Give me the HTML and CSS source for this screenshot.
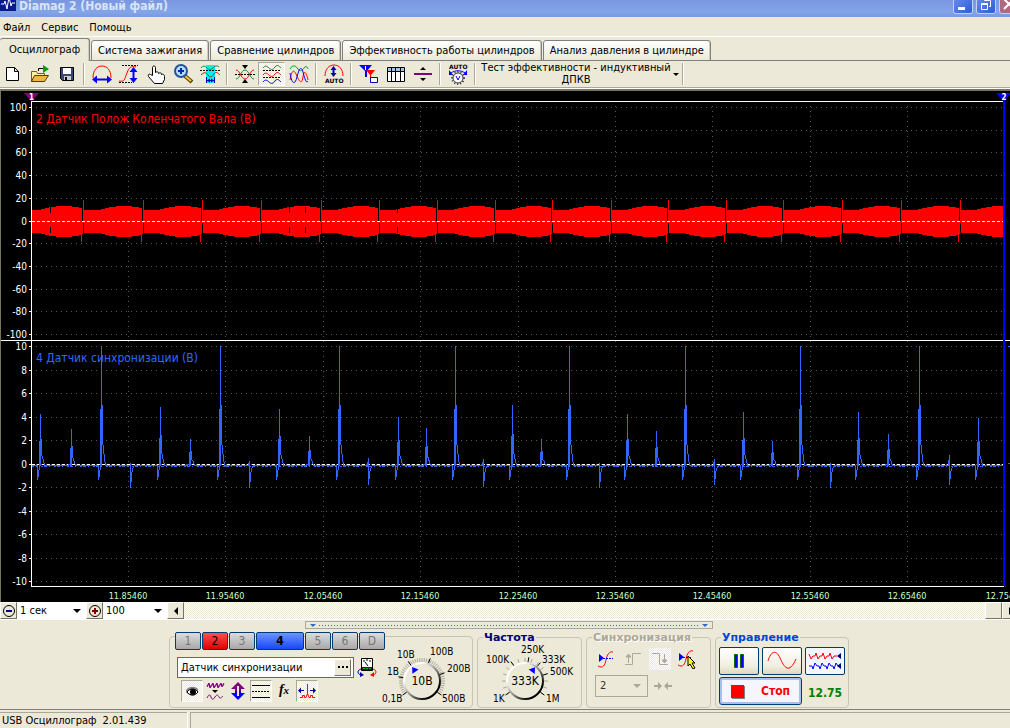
FILE: index.html
```html
<!DOCTYPE html>
<html lang="ru">
<head>
  <meta charset="UTF-8" />
  <meta name="viewport" content="width=device-width, initial-scale=1.0"/>
  <title>Diamag 2 (Новый файл)</title>
  <link rel="stylesheet" href="styles.css">
</head>
<body>
  <header class="titlebar">
    <svg class="app-icon" width="16" height="16" viewBox="0 0 16 16"><rect width="16" height="16" fill="#0a1a8c"/><path d="M1 9h3l1-3 2 8 2-12 2 9 1-3h3" fill="none" stroke="#fff"/></svg>
    <h1>Diamag 2 (Новый файл)</h1>
    <div class="window-buttons">
      <button aria-label="Свернуть"><svg width="18" height="18"><path d="M4 12h7v3H4z" fill="#fff"/></svg></button>
      <button aria-label="Развернуть"><svg width="18" height="18" fill="none" stroke="#fff"><path d="M4.500 8.500h6v6h-6zM4 9.500h7M7.500 6V5.500h6v6H12"/></svg></button>
      <button class="close" aria-label="Закрыть"><svg width="18" height="18"><path d="M4 4l10 10M14 4L4 14" stroke="#fff" stroke-width="2"/></svg></button>
    </div>
  </header>

  <nav class="menu">
    <a href="#">Файл</a>
    <a href="#">Сервис</a>
    <a href="#">Помощь</a>
  </nav>

  <div class="tabs">
    <button class="tab active">Осциллограф</button>
    <button class="tab">Система зажигания</button>
    <button class="tab">Сравнение цилиндров</button>
    <button class="tab">Эффективность работы цилиндров</button>
    <button class="tab">Анализ давления в цилиндре</button>
  </div>

  <div class="toolbar">
    <button class="tool" aria-label="Новый"><svg width="22" height="20" viewBox="0 0 22 20"><path d="M4.500 3.500h8l4 4v9h-12zM12.500 3.500v4h4" fill="#fff" stroke="#000"/></svg></button>
    <button class="tool" aria-label="Открыть"><svg width="22" height="20" viewBox="0 0 22 20"><path d="M2.500 17.500v-10h5l1 2h7v8z" fill="#fff3a0" stroke="#7a5a10"/><path d="M2.500 17.500l3-6h14l-4 6z" fill="#f0b840" stroke="#553c00"/><path d="M14 1l6 4-6 4z" fill="#00a000"/><path d="M9.500 7V4.500H14" fill="none" stroke="#000"/></svg></button>
    <button class="tool" aria-label="Сохранить"><svg width="22" height="20" viewBox="0 0 22 20"><path d="M4.500 3.500h13v13h-11l-2-2z" fill="#3a4878" stroke="#000"/><path d="M7 4h8v6H7z" fill="#fff"/><path d="M8 12h7v4H8z" fill="#ccc"/><path d="M9 13h2v3H9z" fill="#000"/></svg></button>
    <span class="sep"></span>
    <button class="tool" aria-label="Растянуть по времени"><svg width="22" height="20" viewBox="0 0 22 20"><path d="M2 14c0-8 4-12 9-12s9 4 9 12" fill="none" stroke="#f00"/><path d="M5 15.500h12" stroke="#00f" stroke-width="2"/><path d="M1 15.500l5-4v8zM21 15.500l-5-4v8z" fill="#00f"/></svg></button>
    <button class="tool" aria-label="Растянуть по амплитуде"><svg width="22" height="20" viewBox="0 0 22 20"><path d="M4 1.500h16M1 18.500h13" stroke="#000" stroke-dasharray="2 1"/><path d="M1 17c6 1 5-1 8-8 2-6 4-7 9-6" fill="none" stroke="#f00"/><path d="M15.500 6v9" stroke="#00f" stroke-width="2"/><path d="M15.500 3l4 5h-8zM15.500 19l4-5h-8z" fill="#00f"/></svg></button>
    <button class="tool" aria-label="Рука"><svg width="22" height="20" viewBox="0 0 22 20"><path d="M7.500 11.500v-8c0-2 3-2 3 0v5c1-1 3-1 3 1 1-1 3-1 3 1 1-1 3 0 3 2v3l-2 4h-8l-6-7c-1-2 1-3 2-2z" fill="#fff" stroke="#000"/></svg></button>
    <button class="tool" aria-label="Лупа"><svg width="22" height="20" viewBox="0 0 22 20"><path d="M13 12l7 6" stroke="#5b4300" stroke-width="4"/><path d="M13 12l6 5" stroke="#ffc040" stroke-width="2"/><circle cx="9" cy="7" r="6" fill="#b4dcff" stroke="#2850a0" stroke-width="2"/><path d="M6 7h6M9 4v6" stroke="#0030a0" stroke-width="2"/></svg></button>
    <button class="tool" aria-label="Измерение"><svg width="22" height="20" viewBox="0 0 22 20"><path d="M7 1h9v18H7z" fill="#00f0f0"/><path d="M2 4c2-3 4-2 6 0s4 2 6 0 4-3 6-1" fill="none" stroke="#00902a"/><path d="M1 6.500h20" stroke="#000" stroke-dasharray="2 1"/><path d="M2 11c3-3 5-3 7 0s4 2 6-1 4-1 6 1" fill="none" stroke="#f00"/><path d="M7.500 13v6M15.500 13v6M8 16.500h7" stroke="#00a"/><path d="M8 16.500l3-2v4zM15 16.500l-3-2v4z" fill="#00a"/></svg></button>
    <span class="sep"></span>
    <button class="tool" aria-label="Совместить"><svg width="22" height="20" viewBox="0 0 22 20"><path d="M8 1h6l-3 4zM8 19h6l-3-4z"/><path d="M1 10.500h20" stroke="#000" stroke-dasharray="2 1"/><path d="M2 15c4 0 5-9 9-9s5 9 9 9" fill="none" stroke="#00902a"/><path d="M2 6c4 0 5 9 9 9s5-9 9-9" fill="none" stroke="#f00"/></svg></button>
    <button class="tool pressed" aria-label="Разделить"><svg width="22" height="20" viewBox="0 0 22 20"><path d="M2 4c2-3 4-2 6 0s4 2 6-1 4-1 6 1" fill="none" stroke="#00902a"/><path d="M2 11c2-3 4-2 6 0s4 2 6-1 4-1 6 1" fill="none" stroke="#f00"/><path d="M2 18c2-3 4-2 6 0s4 2 6-1 4-1 6 1" fill="none" stroke="#00f"/><path d="M2 6.500h18M2 13.500h18" stroke="#000" stroke-dasharray="2 1"/></svg></button>
    <button class="tool" aria-label="Наложить"><svg width="22" height="20" viewBox="0 0 22 20" fill="none"><path d="M2 5c3-5 6-3 8 0s5 1 6-1 3-2 4 1" stroke="#00902a"/><path d="M2 16C4 5 6 5 9 12s5 8 6 1 3-6 5 3" stroke="#f00"/><path d="M2 9c2 12 5 12 7 4s4-12 6-5 3 12 5 9" stroke="#00f"/></svg></button>
    <span class="sep"></span>
    <button class="tool" aria-label="Авто амплитуда"><svg width="22" height="20" viewBox="0 0 22 20"><path d="M2 12c0-7 4-11 9-11s9 4 9 11" fill="none" stroke="#f00"/><path d="M10.500 4v7" stroke="#00a" stroke-width="2"/><path d="M10.500 2l3 4h-6zM10.500 13l3-4h-6z" fill="#00a"/><text class="auto-text" x="2" y="19">AUTO</text></svg></button>
    <span class="sep"></span>
    <button class="tool" aria-label="Маркеры"><svg width="22" height="20" viewBox="0 0 22 20"><path d="M1 1h13L9 7v6H7V7z" fill="#00f"/><path d="M8 6h9l-4 5v6h-1v-6z" fill="#f00"/><path d="M7.500 2v4" stroke="#fff"/><path d="M12.500 13.500h7v5h-7z" fill="#fff" stroke="#00a"/></svg></button>
    <button class="tool" aria-label="Таблица"><svg width="22" height="20" viewBox="0 0 22 20"><path d="M2.500 3.500h17v14h-17z" fill="#fff" stroke="#000"/><path d="M3 4h16v3H3z" fill="#9fc4e8"/><path d="M2 7.500h18M6.500 4v13M10.500 4v13M15.500 4v13" stroke="#000"/></svg></button>
    <button class="tool" aria-label="Линия"><svg width="22" height="20" viewBox="0 0 22 20"><path d="M2 9h18v2H2z" fill="#800080"/><path d="M8 6h6l-3-3zM8 14h6l-3 3z"/></svg></button>
    <span class="sep"></span>
    <button class="tool" aria-label="Авто диапазон"><svg width="22" height="22" viewBox="0 0 22 22"><text class="auto-text" x="2" y="6">AUTO</text><path d="M4 10c4-3 10-3 14 0" fill="none" stroke="#00f"/><path d="M2 7v5h4zM20 7v5h-4z" fill="#00f"/><circle cx="11" cy="15" r="6" fill="none" stroke="#333" stroke-dasharray="1 2" stroke-width="2"/><circle cx="11" cy="15" r="5" fill="#fff" stroke="#333"/><path d="M9 13l2 4 2-4" fill="none" stroke="#00f"/></svg></button>
    <span class="sep"></span>
    <button class="test-select"><span>Тест эффективности - индуктивный ДПКВ</span><i class="arrow"></i></button>
    <span class="sep"></span>
  </div>

  <main class="scope" id="scope"></main>

  <div class="zoombar">
    <button class="bevel" aria-label="Уменьшить"><svg width="14" height="14"><circle cx="7" cy="7" r="5.500" fill="none" stroke="#000"/><path d="M4 6h6v2H4z" fill="#000080"/></svg></button>
    <select class="zoom-time" aria-label="Развёртка"><option>1 сек</option></select>
    <button class="bevel" aria-label="Увеличить"><svg width="14" height="14"><circle cx="7" cy="7" r="5.500" fill="none" stroke="#000"/><path d="M4 6h6v2H4zM6 4h2v6H6z" fill="#800000"/></svg></button>
    <select class="zoom-percent" aria-label="Масштаб"><option>100</option></select>
    <div class="scrollbar">
      <button class="bevel" aria-label="Влево"><svg width="12" height="12"><path d="M8 2v8L4 6z"/></svg></button>
      <div class="track"></div>
      <button class="bevel" aria-label="Ползунок"></button>
      <button class="bevel right" aria-label="Вправо"><svg width="12" height="12"><path d="M4 2v8l4-4z"/></svg></button>
    </div>
  </div>

  <section class="panel">
    <button class="handle" aria-label="Скрыть панель"><i></i><span></span><i></i></button>
    <div class="groups">
      <div class="group channel-group">
        <div class="channel-left">
          <div class="channels">
            <button>1</button>
            <button class="red">2</button>
            <button>3</button>
            <button class="blue">4</button>
            <button>5</button>
            <button>6</button>
            <button>D</button>
          </div>
          <div class="sensor-row">
            <div class="sensor">
              <input type="text" value="Датчик синхронизации" aria-label="Датчик">
              <button class="bevel" aria-label="Выбрать датчик"><svg width="10" height="4"><path d="M0 1h2v2H0zM4 1h2v2H4zM8 1h2v2H8z"/></svg></button>
            </div>
            <button class="flat" aria-label="Калибровка"><svg width="20" height="22" viewBox="0 0 20 22"><path d="M4.500 2.500h11v12h-11z" fill="#fff" stroke="#000"/><path d="M5 11h10v3H5z" fill="#222"/><path d="M6 12.500h8" stroke="#0b0" stroke-dasharray="2 1"/><path d="M6 5h2M9 4h2M12 5h2M8 6l3 4" stroke="#000"/><path d="M4 13c-4 1-4 5 0 6" fill="none" stroke="#00a"/><path d="M3 16l4 3-4 2z" fill="#00a"/><path d="M16 13c4 1 4 5 0 6" fill="none" stroke="#f00"/><path d="M17 16l-4 3 4 2z" fill="#f00"/></svg></button>
          </div>
          <div class="icon-row">
            <button class="flat pressed" aria-label="Видимость"><svg width="20" height="20" viewBox="0 0 20 20"><path d="M4 9c3-4 9-4 12-1v3c-3 5-8 5-12 0z" fill="#888"/><path d="M5 11c3-4 8-4 11 0-3 4-8 4-11 0z" fill="#fff" stroke="#000"/><circle cx="11" cy="11" r="3"/></svg></button>
            <button class="flat" aria-label="Фильтр"><svg width="20" height="20" viewBox="0 0 20 20" fill="none" stroke="#800080"><path d="M2 5l2-3 1 4 3-4 1 4 3-4 1 4 3-4 1 3 2-3"/><path d="M2 6l2-3 1 4 3-4 1 4 3-4 1 4 3-4 1 3 2-3"/><path d="M2 17c2-4 3-4 4-1s2 3 4 0 3-2 4 0 2 1 4-1"/><path d="M7 9h6l-3 3z" fill="#000" stroke="none"/></svg></button>
            <button class="flat" aria-label="Инверсия"><svg width="20" height="20" viewBox="0 0 20 20"><path d="M10 1l7 7h-4v2H7V8H3z" fill="#800080"/><path d="M10 19l7-7h-4v-2H7v2H3z" fill="#00f"/><path d="M10 5v10" stroke="#ece9d8" stroke-width="2"/></svg></button>
            <button class="flat pressed" aria-label="Линии"><svg width="20" height="20" viewBox="0 0 20 20" stroke="#000"><path d="M1 4.500h18M1 16.500h18"/><path d="M1 10.500h18" stroke-dasharray="2 1"/></svg></button>
            <button class="flat fx" aria-label="Функция">f<small>x</small></button>
            <button class="flat pressed" aria-label="Импульс"><svg width="20" height="20" viewBox="0 0 20 20"><path d="M3 16.500h2.500v-2h2v2h1.500l1.500-4V3v9.500l1.500 4h1.500v-2h2v2H18" fill="none" stroke="#f00"/><path d="M3 9.500h4M13 9.500h5" stroke="#00a"/><path d="M1 9.500l3-3v6zM19 9.500l-3-3v6z" fill="#00a"/></svg></button>
          </div>
        </div>
        <svg class="knob" id="knobVolt" width="96" height="68" viewBox="0 0 96 68"></svg>
      </div>

      <fieldset class="group freq-group">
        <legend>Частота</legend>
        <svg class="knob" id="knobFreq" width="103" height="62" viewBox="0 0 103 62"></svg>
      </fieldset>

      <fieldset class="group sync-group">
        <legend class="off">Синхронизация</legend>
        <div class="sync-row">
          <button class="flat" aria-label="Уровень"><svg width="20" height="20" viewBox="0 0 20 20"><path d="M2 17c5 3 7-1 8-6s3-9 7-8" fill="none" stroke="#f00"/><path d="M3 5v8l5-4z" fill="#00f"/><path d="M7 9.500h10" stroke="#00f" stroke-dasharray="2 1"/></svg></button>
          <button class="flat" aria-label="Фронт"><svg width="20" height="20" viewBox="0 0 20 20" fill="none" stroke="#aca899"><path d="M2 15.500h7.500v-11H18M5.500 14V7"/><path d="M3 8l2.500-3L8 8z" fill="#aca899"/></svg></button>
          <button class="flat dither" aria-label="Спад"><svg width="20" height="20" viewBox="0 0 20 20" fill="none" stroke="#aca899"><path d="M2 4.500h7.500v11H18M14.500 5v7"/><path d="M12 11l2.500 3 2.500-3z" fill="#aca899"/></svg></button>
          <button class="flat" aria-label="Выбор уровня"><svg width="20" height="20" viewBox="0 0 20 20"><path d="M1 16c5 3 7-1 8-6s3-9 7-8" fill="none" stroke="#f00"/><path d="M2 4v8l5-4z" fill="#00f"/><path d="M6 8.500h9" stroke="#00f" stroke-dasharray="2 1"/><path d="M11 7l7 7h-3l3 5-2 1-3-5-2 2z" fill="#ff0" stroke="#000"/></svg></button>
        </div>
        <div class="sync-row">
          <select class="sync-channel" aria-label="Канал синхронизации" disabled><option>2</option></select>
          <svg width="20" height="12" viewBox="0 0 20 12" fill="#aca899"><path d="M1 5h4V2l4 4-4 4V7H1zM19 5h-4V2l-4 4 4 4V7h4z"/></svg>
        </div>
      </fieldset>

      <fieldset class="group control-group">
        <legend class="light">Управление</legend>
        <div class="controls">
          <button class="xp" aria-label="Пауза"><svg width="14" height="18"><path d="M2.500 2.500h3v13h-3zM8.500 2.500h3v13h-3z" fill="#00f" stroke="#007000"/></svg></button>
          <button class="xp" aria-label="Синус"><svg width="30" height="20" viewBox="0 0 30 20"><path d="M1 10C4 0 9-2 13 7s9 17 16 1" fill="none" stroke="#f00"/></svg></button>
          <button class="xp pale" aria-label="Кривые"><svg width="34" height="20" viewBox="0 0 34 20" fill="none"><path d="M1 3l2 5 2-3h2l1-3 2 6 2-3h2l1-3 2 6 2-3h2l1-3 2 6 2-3h3" stroke="#f00"/><path d="M1 15h3l1 3 2-6 2 3h2l1 3 2-6 2 3h2l1 3 2-6 2 3h2l1 3 2-6 2 3h2" stroke="#00f"/><path d="M33 2v6l-4-3zM33 12v6l-4-3z" fill="#000080"/></svg></button>
          <button class="xp stop"><i></i>Стоп</button>
          <output>12.75</output>
        </div>
      </fieldset>
    </div>
  </section>

  <footer class="status">
    <div class="version"><span>USB Осциллограф</span><span>2.01.439</span></div>
    <div class="rest"></div>
  </footer>

  <script src="scope.js"></script>
</body>
</html>
```
FILE: styles.css
```css
* { box-sizing: border-box; }

body {
  margin: 0;
  height: 100vh;
  display: flex;
  flex-direction: column;
  overflow: hidden;
  background: #ece9d8;
  color: #000;
  font: 11px/14px "DejaVu Sans Condensed", "DejaVu Sans", sans-serif;
}

button, input, select {
  font: inherit;
  color: inherit;
  margin: 0;
  padding: 0;
  border: none;
  border-radius: 0;
  background: none;
}

svg { display: block; flex: none; }

/* title bar */
.titlebar {
  height: 17px;
  flex: none;
  display: flex;
  align-items: flex-end;
  overflow: hidden;
  background: linear-gradient(#7a96df, #82a5e8 70%, #7b99e1);
}

.app-icon { margin-bottom: 6px; }

.titlebar h1 {
  flex: 1;
  margin: 0 0 5px 3px;
  font: bold 12px/12px "DejaVu Sans Condensed", "DejaVu Sans", sans-serif;
  color: #d8e4f8;
}

.window-buttons {
  display: flex;
  gap: 3px;
  margin: 0 -9px 3px 0;
}

.window-buttons button {
  border: 1px solid #c0d0f4;
  border-radius: 3px;
  background: linear-gradient(135deg, #6c92ee, #2d5bd6);
}

.window-buttons .close { background: #b06a80; }

/* menu and tabs */
.menu {
  height: 20px;
  flex: none;
  display: flex;
  gap: 11px;
  padding: 4px 3px 0;
  border-bottom: 1px solid #fff;
}

.menu a { color: #000; text-decoration: none; }

.tabs {
  height: 24px;
  flex: none;
  display: flex;
  align-items: flex-end;
  gap: 1px;
  box-shadow: inset 0 -1px #808080;
}

.tab {
  height: 21px;
  padding: 0 6px;
  border: 1px solid #808080;
  border-radius: 3px 3px 0 0;
  background: linear-gradient(#fff, #ece9d8);
  box-shadow: inset -1px 0 #d0ccba;
  white-space: nowrap;
}

.tab.active {
  height: 23px;
  padding: 0 9px;
  border-left: none;
  border-bottom: none;
  background: #ece9d8;
}

/* toolbar */
.toolbar {
  height: 30px;
  flex: none;
  display: flex;
  align-items: center;
  margin-left: -1px;
  padding-bottom: 2px;
  border-bottom: 2px solid #77745f;
  box-shadow: inset 0 -1px #fff, inset 0 -2px #aca899;
}

.tool {
  width: 27px;
  height: 24px;
  flex: none;
  display: flex;
  align-items: center;
  justify-content: center;
}

.pressed {
  border: 1px solid #fff;
  border-top-color: #aca899;
  border-left-color: #aca899;
}

.pressed, .dither, .track {
  background: repeating-conic-gradient(#fff 0 25%, #ece9d8 0 50%) 0 0 / 2px 2px;
}

.sep {
  width: 2px;
  height: 22px;
  flex: none;
  margin: 0 3px;
  border-left: 1px solid #aca899;
  border-right: 1px solid #fff;
}

.auto-text { font: bold 6px "DejaVu Sans", sans-serif; }

.test-select {
  display: flex;
  align-items: center;
  line-height: 12px;
}

.test-select span { width: 194px; }

.arrow {
  border: 3px solid transparent;
  border-top-color: #000;
  border-bottom: none;
}

/* oscilloscope */
.scope {
  flex: 1;
  min-height: 0;
  overflow: hidden;
  background: #000;
  border-left: 1px solid #77745f;
}

.scope text { font-size: 10px; fill: #fff; }
.scope .time { font-size: 9px; fill: #c8ffc8; text-anchor: middle; }
.scope .value { text-anchor: end; }
.scope .name { font-size: 12px; }
.scope .name.red { fill: #f00; }
.scope .name.blue { fill: #3366ff; }
.scope .mark { font-size: 8px; font-weight: bold; text-anchor: middle; }
.grid { stroke: #585858; stroke-dasharray: 1 4; }
.axis { stroke: #fff; }
.zero { stroke: #fff; stroke-dasharray: 3 2; }
.wave-red { fill: #f00; }
.wave-blue { fill: none; stroke: #3366ff; }
.noise { stroke: #3366ff; stroke-dasharray: 3 2 1 4 2 1; }
.notch { fill: #000; }
.cursor { fill: #00f; }
.cursor-start { fill: #800080; }

/* zoom row */
.zoombar {
  height: 18px;
  flex: none;
  display: flex;
  border-bottom: 1px solid #fff;
}

.bevel {
  width: 17px;
  height: 17px;
  flex: none;
  display: flex;
  align-items: center;
  justify-content: center;
  background: #ece9d8;
  border: 1px solid #77745f;
  border-top-color: #fff;
  border-left-color: #fff;
}

select {
  appearance: none;
  height: 17px;
  padding: 0 3px;
}

.zoom-time, .zoom-percent {
  background: #fff url("data:image/svg+xml,%3Csvg xmlns='http://www.w3.org/2000/svg' width='8' height='4'%3E%3Cpath d='M0 0h8L4 4z'/%3E%3C/svg%3E") no-repeat right 5px center;
}

.zoom-time { width: 69px; }
.zoom-percent { width: 64px; }

.scrollbar { flex: 1; display: flex; min-width: 0; margin-right: -9px; }
.track { flex: 1; }

/* control panel */
.panel {
  height: 89px;
  flex: none;
  display: flex;
  flex-direction: column;
  align-items: center;
  padding: 1px 0 0 8px;
}

.handle {
  width: 408px;
  height: 8px;
  flex: none;
  display: flex;
  align-items: center;
  gap: 3px;
  padding: 0 4px;
  border: 1px solid #aca899;
}

.handle i {
  border: 3px solid transparent;
  border-top-color: #316ac5;
  border-bottom: none;
}

.handle span {
  flex: 1;
  height: 1px;
  background: repeating-linear-gradient(90deg, #316ac5 0 1px, transparent 1px 3px);
}

.groups {
  display: flex;
  align-items: flex-end;
  gap: 4px;
  flex: 1;
  padding-bottom: 1px;
}

.group {
  height: 72px;
  min-width: 0;
  margin: 0;
  padding: 0;
  border: 1px solid #c8c5b4;
  border-radius: 4px;
}

fieldset.group { height: 77px; }

legend {
  margin-left: 5px;
  padding: 0 1px;
  font: bold 11px/13px "DejaVu Sans", sans-serif;
  color: #000080;
}

legend.off { color: #aca899; text-shadow: 1px 1px #fff; }
legend.light { color: #0046d5; }

.channel-group { width: 304px; display: flex; padding-left: 5px; }
.channel-left { display: flex; flex-direction: column; width: 206px; flex: none; }

.channels {
  display: flex;
  gap: 1px;
  margin-top: -5px;
}

.channels button {
  width: 26px;
  height: 18px;
  flex: none;
  border: 1px solid #003c74;
  border-radius: 2px;
  background: linear-gradient(#dcdcdc, #a8a8a8);
  color: #777;
  font-size: 12px;
}

.channels .red { background: linear-gradient(#ff5050, #e00000); color: #000; }

.channels .blue {
  width: 48px;
  background: linear-gradient(#6c94ff, #1848f8);
  color: #000;
  font-weight: bold;
}

.sensor-row { display: flex; align-items: center; gap: 2px; margin: 6px 0 2px 2px; }

.sensor {
  width: 177px;
  display: flex;
  align-items: center;
  padding: 0 2px;
  background: #fff;
  border: 1px solid #3366ff;
}

.sensor input { flex: 1; min-width: 0; height: 19px; padding: 0 1px; outline: none; }

.icon-row { display: flex; gap: 1px; margin-left: 6px; }

.flat {
  width: 22px;
  height: 22px;
  flex: none;
  display: flex;
  align-items: center;
  justify-content: center;
}

.fx {
  align-items: baseline;
  font: italic bold 14px/20px "Liberation Serif", serif;
}

.fx small { font-size: 11px; }

.knob text { font-size: 10px; }
.knob .value { font-size: 12px; text-anchor: middle; }

.freq-group { width: 105px; }
.sync-group { width: 125px; }
.control-group { width: 134px; }

.sync-row { display: flex; align-items: center; gap: 5px; padding: 4px 8px 1px; }

.sync-channel {
  width: 53px;
  height: 22px;
  padding: 0 4px;
  border: 1px solid #aca899;
  color: #333;
  opacity: 1;
  background: #ece9d8 url("data:image/svg+xml,%3Csvg xmlns='http://www.w3.org/2000/svg' width='8' height='4'%3E%3Cpath d='M0 0h8L4 4z' fill='%23aca899'/%3E%3C/svg%3E") no-repeat right 6px center;
}

.controls {
  display: grid;
  grid-template-columns: 40px 40px 40px;
  gap: 2px 3px;
  padding: 3px;
}

.xp {
  height: 28px;
  display: flex;
  align-items: center;
  justify-content: center;
  border: 1px solid #003c74;
  border-radius: 2px;
  background: linear-gradient(#fff, #f0eee0 70%, #dcd8c0);
}

.xp.pale { background: #f4f6ff; }

.xp.stop {
  grid-column: span 2;
  gap: 17px;
  border-radius: 3px;
  background: #f4f6fc;
  box-shadow: inset 0 0 0 2px #a8c0ee;
  color: #f00;
  font: bold 12px/14px "DejaVu Sans Condensed", sans-serif;
}

.xp.stop i { width: 13px; height: 13px; background: #f00; box-shadow: 1px 1px #808080; }

output {
  align-self: center;
  padding-top: 4px;
  text-align: center;
  color: #008000;
  font: bold 12px/14px "DejaVu Sans Condensed", sans-serif;
}

/* status bar */
.status {
  height: 19px;
  flex: none;
  display: flex;
  gap: 3px;
  padding-top: 2px;
  border-top: 1px solid #808080;
}

.status div { border: solid #aca899; border-width: 1px 0 0; }
.version { display: flex; gap: 6px; width: 187px; padding: 1px 2px; box-shadow: 1px 0 #fff; }
.status .rest { flex: 1; border-left-width: 1px; }
```
FILE: scope.js
```js
const NS = "http://www.w3.org/2000/svg";
const scope = document.getElementById("scope");

// sensor 2: position of every missing tooth
const gaps = [52, 112, 171, 230, 290, 348, 406, 464, 521, 580, 637, 695, 752, 811, 870, 929];

// sensor 4: [position, peak in volts, dip in volts]
const pulses = [
  [9, 4.2, -1.4], [40, 2.9, 0], [70, 10, -1.4], [99, 0, -2.1],
  [129, 4.8, -1.4], [159, 2.1, 0], [189, 10, -1.4], [218, 0.2, -2.1],
  [248, 4.6, -1.4], [278, 2.3, 0], [308, 10, -1.4], [337, 0.5, -1.8],
  [367, 4, -1.4], [395, 3, 0], [424, 10, -1.4], [452, 0.4, -2],
  [481, 5, -1.4], [510, 2.1, 0], [538, 10, -1.4], [568, 0, -2.1],
  [596, 4.2, -1.4], [625, 2.8, 0], [654, 10, -1.4], [683, 0.4, -1.8],
  [712, 4.4, -1.4], [741, 1.9, 0], [769, 10, -1.4], [799, 0, -2.1],
  [827, 4.4, -1.4], [857, 2.5, 0], [888, 10, -1.4], [918, 0.7, -1.8],
  [947, 3.9, -1.4]
];
const SPAN = 973;

function add(parent, tag, attrs, text) {
  const el = document.createElementNS(NS, tag);
  for (const key in attrs) el.setAttribute(key, attrs[key]);
  if (text !== undefined) el.textContent = text;
  parent.append(el);
  return el;
}

function line(svg, cls, x1, y1, x2, y2) {
  add(svg, "path", { class: cls, d: `M${x1} ${y1}L${x2} ${y2}`, "shape-rendering": "crispEdges" });
}

function drawScope() {
  scope.innerHTML = "";
  const W = scope.clientWidth, H = scope.clientHeight;
  const svg = add(scope, "svg", { width: W, height: H });
  const left = 30, right = W - 6, bottom = H - 16;
  const mid = Math.round(H * 0.487);
  const px = p => Math.round(left + p * (right - left) / SPAN);
  const y1 = v => Math.round(16 + (100 - v) * (mid - 22) / 200);
  const y2 = v => Math.round(mid + 6 + (10 - v) * (bottom - mid - 11) / 20);

  for (let i = 0; i <= 10; i++) {
    const a = 100 - i * 20, b = 10 - i * 2;
    for (const [v, y] of [[a, y1(a)], [b, y2(b)]]) {
      line(svg, "grid", left + 5, y + 0.5, right, y + 0.5);
      line(svg, "axis", left - 2, y + 0.5, left + 1, y + 0.5);
      add(svg, "text", { class: "value", x: left - 4, y: y + 4 }, v);
    }
  }
  for (let i = 0; i < 10; i++) {
    const x = px(97 + i * 97.4);
    if (i < 9) line(svg, "grid", x + 0.5, 15, x + 0.5, bottom);
    line(svg, "grid", x + 0.5, bottom, x + 0.5, bottom + 3);
    add(svg, "text", { class: "time", x: x, y: bottom + 13 }, (11.8546 + i * 0.1).toFixed(5));
  }

  // red band: swells between the gaps
  const wave = add(svg, "g", { class: "wave-red", "shape-rendering": "crispEdges" });
  let top = "", low = "";
  for (let p = 0; p <= SPAN; p++) {
    let k = 0;
    while (k < gaps.length && gaps[k] <= p) k++;
    const end = gaps[k] || 988, start = k ? gaps[k - 1] : -8;
    const t = (p - start) / (end - start);
    const swell = t < 0.25 ? 0 : Math.sin((t - 0.25) / 0.85 * Math.PI);
    const x = px(p);
    top += `L${x} ${y1(9.3 + Math.round(swell * 4) * 0.88)}`;
    low = `L${x} ${y1(-11.2 - Math.round(swell * 4) * 0.88)}` + low;
  }
  add(wave, "path", { d: "M" + top.slice(1) + low + "Z" });
  for (const g of gaps) {
    const x = px(g);
    add(wave, "rect", { class: "notch", x: x - 1, y: y1(12), width: 1, height: y1(0) - y1(12) });
    add(wave, "rect", { class: "notch", x: x, y: y1(-2), width: 1, height: y1(-13) - y1(-2) });
    add(wave, "rect", { x: x, y: y1(18), width: 1, height: y1(0) - y1(18) });
    add(wave, "rect", { x: x - 2, y: y1(0), width: 1, height: y1(-19) - y1(0) });
  }
  for (const p of [19, 258, 274, 366]) {
    add(wave, "rect", { class: "notch", x: px(p), y: y1(12), width: 1, height: 6 });
    add(wave, "rect", { class: "notch", x: px(p), y: y1(-6), width: 1, height: 6 });
  }

  line(svg, "zero", left + 1, y1(0) + 0.5, right, y1(0) + 0.5);
  line(svg, "zero", left + 1, y2(0) + 0.5, right, y2(0) + 0.5);

  // blue pulses
  let d = `M${left} ${y2(0) + 1.5}`;
  for (const [p, peak, dip] of pulses) {
    const x = px(p) + 0.5, base = y2(0) + 1.5;
    if (dip < -1.5) {
      d += `H${x - 1}L${x} ${y2(peak)}V${y2(dip)}L${x + 1} ${y2(dip / 2)}L${x + 2} ${y2(-0.5)}L${x + 4} ${base}`;
    } else {
      d += `H${x - 3}V${y2(dip)}L${x - 2} ${y2(dip * 0.7)}L${x - 1} ${base}V${y2(peak * 0.46)}L${x} ${base}V${y2(peak)}V${base}`;
      d += `L${x + 1} ${y2(peak * 0.5)}L${x + 1} ${y2(peak * 0.2)}L${x + 3} ${y2(peak * 0.05)}L${x + 4} ${base}`;
    }
  }
  add(svg, "path", { class: "wave-blue", d: d + `H${right}`, "shape-rendering": "crispEdges" });
  line(svg, "noise", left, y2(0) + 2.5, right, y2(0) + 2.5);

  add(svg, "text", { class: "name red", x: left + 5, y: 32 }, "2 Датчик Полож Коленчатого Вала (В)");
  add(svg, "text", { class: "name blue", x: left + 5, y: mid + 22 }, "4 Датчик синхронизации (В)");

  // frame and cursors
  line(svg, "axis", left, 10.5, right, 10.5);
  line(svg, "axis", 0, mid + 0.5, W, mid + 0.5);
  line(svg, "axis", left, bottom + 0.5, right, bottom + 0.5);
  line(svg, "axis", left + 0.5, 10, left + 0.5, bottom);
  add(svg, "path", { class: "cursor-start", d: `M${left - 7} 2h15l-7 8h-1z` });
  add(svg, "text", { class: "mark", x: left + 0.5, y: 9 }, 1);
  add(svg, "path", { class: "cursor", d: `M${right - 8} 2h15l-7 8h-1zM${right - 1} 6h2V${bottom}h-2z` });
  add(svg, "text", { class: "mark", x: right, y: 9 }, 2);
  // tails of the right-hand scale
  add(svg, "path", { class: "wave-blue", d: `M${W - 2} ${y2(10) + 0.5}h2M${W - 2} ${y2(0) - 0.5}h2` });
}

function drawKnob(id, cx, cy, value, step, pointer, labels) {
  const svg = document.getElementById(id);
  const polar = (r, a) => {
    const t = a * Math.PI / 180;
    return `${(cx + r * Math.sin(t)).toFixed(1)} ${(cy - r * Math.cos(t)).toFixed(1)}`;
  };
  const grad = add(svg, "linearGradient", { id: id + "Rim", x1: 0, y1: 0, x2: 1, y2: 1 });
  add(grad, "stop", { offset: 0.25, "stop-color": "#fff" });
  add(grad, "stop", { offset: 0.5, "stop-color": "#999" });
  add(grad, "stop", { offset: 0.8, "stop-color": "#000" });

  let ticks = "";
  for (let a = -126; a <= 126; a += step) ticks += `M${polar(19, a)}L${polar(23, a)}`;
  add(svg, "path", { d: ticks, stroke: "#aca899", fill: "none" });
  add(svg, "circle", { cx: cx, cy: cy, r: 18, fill: "#ece9d8", stroke: `url(#${id}Rim)`, "stroke-width": 2 });
  for (const [text, x, y, a] of labels) {
    add(svg, "path", { d: `M${polar(19, a)}L${polar(24, a)}`, stroke: "#000" });
    add(svg, "text", { x: x, y: y }, text);
  }
  add(svg, "path", {
    d: `M${polar(17, pointer)}L${polar(12, pointer - 18)}L${polar(12, pointer + 18)}Z`,
    fill: "#00f"
  });
  add(svg, "text", { class: "value", x: cx, y: cy + 4 }, value);
}

drawKnob("knobVolt", 41, 44, "10В", 6, -35, [
  ["0,1В", 1, 65, -126], ["1В", 6, 38, -80], ["10В", 16, 21, -35],
  ["100В", 49, 18, 20], ["200В", 66, 35, 70], ["500В", 61, 65, 126]
]);
drawKnob("knobFreq", 47, 37, "333K", 18, 36, [
  ["1K", 15, 58, -126], ["100K", 8, 19, -36], ["250K", 43, 9, 9],
  ["333K", 64, 19, 40], ["500K", 72, 31, 72], ["1M", 68, 58, 126]
]);
drawScope();
window.addEventListener("resize", drawScope);
```
